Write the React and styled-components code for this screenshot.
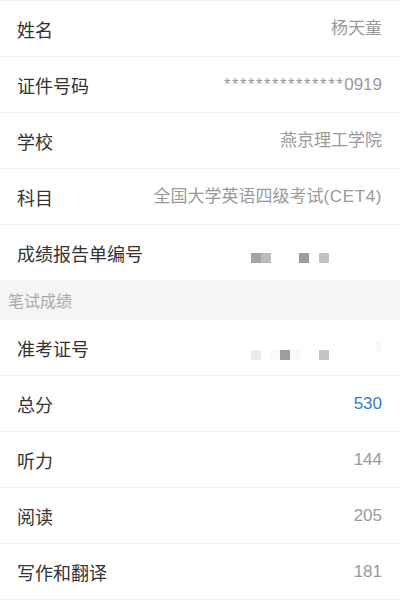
import React from 'react'
import styled, { createGlobalStyle } from 'styled-components'

const GlobalStyle = createGlobalStyle`
  html, body {
    margin: 0;
    padding: 0;
    background: #ffffff;
  }
  body {
    font-family: "Liberation Sans", "Noto Sans CJK SC", sans-serif;
    -webkit-font-smoothing: antialiased;
  }
`

const Page = styled.div`
  width: 400px;
  height: 600px;
  overflow: hidden;
  background: #ffffff;
  border-top: 1px solid #f2f2f2;
  box-sizing: border-box;
`

const Group = styled.div`
  background: #ffffff;
`

const Row = styled.div`
  display: flex;
  align-items: center;
  justify-content: space-between;
  height: ${p => (p.$last ? 55 : 56)}px;
  padding: 0 18px 0 17px;
  box-sizing: border-box;
  border-bottom: ${p => (p.$last ? 'none' : '1px solid #f1f1f1')};
`

const Label = styled.span`
  font-family: "Noto Sans CJK SC", sans-serif;
  font-size: 18px;
  color: #333333;
  line-height: 1;
`

const Value = styled.span`
  font-family: "Liberation Sans", "Noto Sans CJK SC", sans-serif;
  font-size: 17px;
  color: ${p => (p.$accent ? '#2f7bd5' : '#9a9a9a')};
  line-height: 1;
  white-space: nowrap;
`

const Stars = styled.span`
  letter-spacing: 1.4px;
`

const Latin = styled.span`
  letter-spacing: 0.6px;
`

const SectionHeader = styled.div`
  display: flex;
  align-items: center;
  height: 40px;
  padding-left: 8px;
  background: #f5f5f5;
  font-family: "Noto Sans CJK SC", sans-serif;
  font-size: 16px;
  color: #a8a8a8;
`

// pixelated redaction blocks, drawn as a small picture
const Mosaic = ({ cells }) => (
  <svg width="131" height="24" viewBox="0 0 131 24">
    {cells.map(([x, y, c], i) => (
      <rect key={i} x={x} y={y} width="10" height="10" fill={c} />
    ))}
  </svg>
)

const reportCells = [
  [0, 12, '#a3a3a3'],
  [10, 12, '#bcbcbc'],
  [48, 12, '#9c9c9c'],
  [68, 12, '#c2c2c2'],
]

const ticketCells = [
  [0, 14, '#ececec'],
  [19, 14, '#fafafa'],
  [29, 14, '#9e9e9e'],
  [39, 14, '#f8f8f8'],
  [68, 14, '#c4c4c4'],
  [125, 5, '#f8f8f8'],
]

const info = [
  { label: '姓名', value: '杨天童' },
  { label: '证件号码', value: <><Stars>***************</Stars>0919</> },
  { label: '学校', value: '燕京理工学院' },
  { label: '科目', value: <>全国大学英语四级考试<Latin>(CET4)</Latin></> },
]

const scores = [
  { label: '总分', value: '530', accent: true },
  { label: '听力', value: '144' },
  { label: '阅读', value: '205' },
  { label: '写作和翻译', value: '181' },
]

const App = () => {
  return (
    <>
      <GlobalStyle />
      <Page>
        <Group>
          {info.map(item => (
            <Row key={item.label}>
              <Label>{item.label}</Label>
              <Value>{item.value}</Value>
            </Row>
          ))}
          <Row $last>
            <Label>成绩报告单编号</Label>
            <Mosaic cells={reportCells} />
          </Row>
        </Group>
        <SectionHeader>笔试成绩</SectionHeader>
        <Group>
          <Row>
            <Label>准考证号</Label>
            <Mosaic cells={ticketCells} />
          </Row>
          {scores.map(item => (
            <Row key={item.label}>
              <Label>{item.label}</Label>
              <Value $accent={item.accent}>{item.value}</Value>
            </Row>
          ))}
        </Group>
      </Page>
    </>
  )
}

export default App
